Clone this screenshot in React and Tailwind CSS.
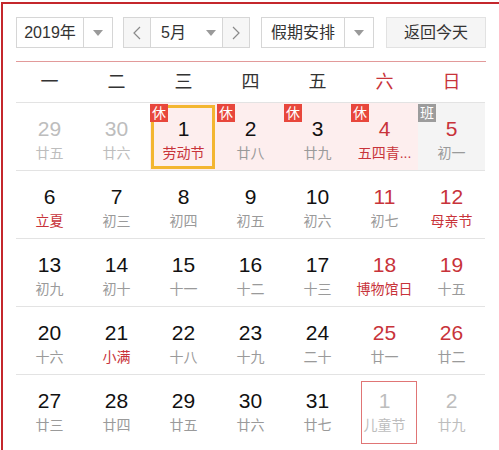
import React from "react";

const FONT = { fontFamily: '"Liberation Sans", "Noto Sans CJK SC", sans-serif' };

const Caret = () => (
  <svg width="10" height="6" viewBox="0 0 10 6">
    <path d="M0 0 L10 0 L5 6 Z" fill="#9a9a9a" />
  </svg>
);

const Chevron = ({ dir }) => (
  <svg width="8" height="14" viewBox="0 0 8 14">
    <path
      d={dir === "left" ? "M7 1 L1 7 L7 13" : "M1 1 L7 7 L1 13"}
      fill="none"
      stroke="#8a8a8a"
      strokeWidth="1.2"
    />
  </svg>
);

// kind: other | normal ; numRed ; lunarRed ; badge: 休/班 ; bg: rest/work ; selected ; boxed
const rows = [
  [
    { d: 29, l: "廿五", other: true },
    { d: 30, l: "廿六", other: true },
    { d: 1, l: "劳动节", lunarRed: true, badge: "休", bg: "rest", selected: true },
    { d: 2, l: "廿八", badge: "休", bg: "rest" },
    { d: 3, l: "廿九", badge: "休", bg: "rest" },
    { d: 4, l: "五四青...", numRed: true, lunarRed: true, badge: "休", bg: "rest" },
    { d: 5, l: "初一", numRed: true, badge: "班", bg: "work" },
  ],
  [
    { d: 6, l: "立夏", lunarRed: true },
    { d: 7, l: "初三" },
    { d: 8, l: "初四" },
    { d: 9, l: "初五" },
    { d: 10, l: "初六" },
    { d: 11, l: "初七", numRed: true },
    { d: 12, l: "母亲节", numRed: true, lunarRed: true },
  ],
  [
    { d: 13, l: "初九" },
    { d: 14, l: "初十" },
    { d: 15, l: "十一" },
    { d: 16, l: "十二" },
    { d: 17, l: "十三" },
    { d: 18, l: "博物馆日", numRed: true, lunarRed: true },
    { d: 19, l: "十五", numRed: true },
  ],
  [
    { d: 20, l: "十六" },
    { d: 21, l: "小满", lunarRed: true },
    { d: 22, l: "十八" },
    { d: 23, l: "十九" },
    { d: 24, l: "二十" },
    { d: 25, l: "廿一", numRed: true },
    { d: 26, l: "廿二", numRed: true },
  ],
  [
    { d: 27, l: "廿三" },
    { d: 28, l: "廿四" },
    { d: 29, l: "廿五" },
    { d: 30, l: "廿六" },
    { d: 31, l: "廿七" },
    { d: 1, l: "儿童节", other: true, boxed: true },
    { d: 2, l: "廿九", other: true },
  ],
];

const weekdays = ["一", "二", "三", "四", "五", "六", "日"];

function Cell({ c }) {
  const bg = c.bg === "rest" ? "bg-[#fdeeee]" : c.bg === "work" ? "bg-[#f4f4f4]" : "bg-white";
  const numColor = c.other ? "text-[#bdbdbd]" : c.numRed ? "text-[#c8333a]" : "text-[#111]";
  const lunarColor = c.other ? "text-[#bdbdbd]" : c.lunarRed ? "text-[#c8333a]" : "text-[#9a9a9a]";
  return (
    <div className={`relative h-[67px] flex flex-col items-center pt-[14px] ${bg}`}>
      {c.selected && (
        <div className="absolute left-[1px] top-[2px] w-[64px] h-[64px] border-[3px] border-[#f3b631]" />
      )}
      {c.boxed && (
        <div className="absolute left-[10px] top-[6px] w-[56px] h-[63px] border border-[#e07575]" />
      )}
      {c.badge && (
        <div
          className={`absolute left-0 top-[1px] w-[18px] h-[18px] flex items-center justify-center text-white text-[14px] leading-none ${
            c.badge === "休" ? "bg-[#e8473c]" : "bg-[#9c9c9c]"
          }`}
        >
          {c.badge}
        </div>
      )}
      <div className={`relative text-[21px] leading-[24px] ${numColor}`}>{c.d}</div>
      <div className={`relative text-[14px] leading-[18px] mt-[3px] whitespace-nowrap ${lunarColor}`}>{c.l}</div>
    </div>
  );
}

export default function App() {
  return (
    <div className="w-[499px] h-[450px] overflow-hidden bg-white" style={FONT}>
      <div className="ml-[1px] mt-[2px] border-l-2 border-t-2 border-[#c4272c] pl-[13px] pt-[13px] h-[460px] w-[520px]">
        {/* controls */}
        <div className="flex items-center h-[31px] text-[16px] text-[#333]">
          <div className="flex h-[31px] w-[97px] border border-[#d6d6d6] bg-white">
            <div className="flex-1 flex items-center justify-center">2019年</div>
            <div className="w-[29px] border-l border-[#d6d6d6] flex items-center justify-center">
              <Caret />
            </div>
          </div>
          <div className="flex h-[31px] w-[127px] ml-[10px] border border-[#d6d6d6] bg-white">
            <div className="w-[27px] bg-[#f6f6f6] border-r border-[#d6d6d6] flex items-center justify-center">
              <Chevron dir="left" />
            </div>
            <div className="flex-1 flex items-center pl-[10px]">
              <span>5月</span>
              <span className="ml-[20px] flex items-center">
                <Caret />
              </span>
            </div>
            <div className="w-[27px] bg-[#f6f6f6] border-l border-[#d6d6d6] flex items-center justify-center">
              <Chevron dir="right" />
            </div>
          </div>
          <div className="flex h-[31px] w-[113px] ml-[11px] border border-[#d6d6d6] bg-white">
            <div className="flex-1 flex items-center justify-center">假期安排</div>
            <div className="w-[29px] border-l border-[#d6d6d6] flex items-center justify-center">
              <Caret />
            </div>
          </div>
          <div className="h-[31px] w-[100px] ml-[12px] border border-[#e2e2e2] bg-[#f5f5f5] flex items-center justify-center">
            返回今天
          </div>
        </div>

        {/* red line */}
        <div className="mt-[13px] h-[1px] w-[470px] bg-[#e29a9a]" />

        {/* weekday header */}
        <div className="grid grid-cols-[repeat(7,67px)] h-[40px]">
          {weekdays.map((w, i) => (
            <div
              key={w}
              className={`flex items-center justify-center text-[18px] ${i >= 5 ? "text-[#c8333a]" : "text-[#333]"}`}
            >
              {w}
            </div>
          ))}
        </div>

        {/* dates */}
        <div className="w-[469px]">
          {rows.map((r, ri) => (
            <div key={ri} className="grid grid-cols-[repeat(7,67px)] border-t border-[#e3e3e3]">
              {r.map((c, ci) => (
                <Cell key={ci} c={c} />
              ))}
            </div>
          ))}
        </div>
      </div>
    </div>
  );
}
